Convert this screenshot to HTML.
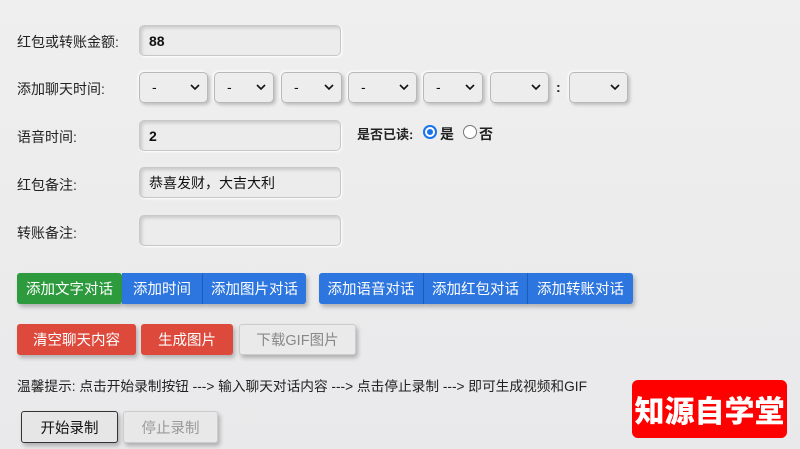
<!DOCTYPE html>
<html><head><meta charset="utf-8"><style>
*{box-sizing:border-box;margin:0;padding:0}
body{width:800px;height:449px;overflow:hidden;background:linear-gradient(180deg,#efefef,#e9e9eb);font-family:"Liberation Sans","Noto Sans CJK SC",sans-serif;font-size:14px;color:#222;position:relative}
.a{position:absolute}
.lbl{left:17px;font-size:14px;color:#222}
.in{position:absolute;border:1.5px solid #c8c8c8;border-radius:5px;background:#ececec;box-shadow:inset 2px 2px 3px rgba(0,0,0,.15),1px 1px 2px #fff;font-size:14px;padding-left:9px;display:flex;align-items:center;font-weight:bold;color:#111}
.sel{position:absolute;top:72px;height:31px;border:1.5px solid #b8b8b8;border-radius:5px;background:#ededed;box-shadow:2px 2px 3px rgba(0,0,0,.2),-1px -1px 2px #fff;font-size:14px;padding-left:12px;line-height:28px;color:#111}
.sel svg{position:absolute;right:7px;top:11px}
.btn{position:absolute;height:31px;color:#fff;font-size:14.5px;display:flex;align-items:center;justify-content:center;border-radius:3px;box-shadow:2px 3px 4px rgba(0,0,0,.25)}
.b{background:#2d76e0;border-right:1px solid #1f5fbf}
.g{background:#2e9a3e}
.r{background:#dd4a3c}
</style></head><body>
<div class="a lbl" style="top:32px">红包或转账金额:</div>
<div class="in" style="left:139px;top:25px;width:202px;height:31px">88</div>
<div class="a lbl" style="top:79px">添加聊天时间:</div>
<div class="sel" style="left:139px;width:69px">-<svg width="10" height="7"><path d="M1 1l4 4 4-4" fill="none" stroke="#111" stroke-width="1.6"/></svg></div>
<div class="sel" style="left:214px;width:60px">-<svg width="10" height="7"><path d="M1 1l4 4 4-4" fill="none" stroke="#111" stroke-width="1.6"/></svg></div>
<div class="sel" style="left:281px;width:61px">-<svg width="10" height="7"><path d="M1 1l4 4 4-4" fill="none" stroke="#111" stroke-width="1.6"/></svg></div>
<div class="sel" style="left:348px;width:69px">-<svg width="10" height="7"><path d="M1 1l4 4 4-4" fill="none" stroke="#111" stroke-width="1.6"/></svg></div>
<div class="sel" style="left:423px;width:60px">-<svg width="10" height="7"><path d="M1 1l4 4 4-4" fill="none" stroke="#111" stroke-width="1.6"/></svg></div>
<div class="sel" style="left:490px;width:59px"><svg width="10" height="7"><path d="M1 1l4 4 4-4" fill="none" stroke="#111" stroke-width="1.6"/></svg></div>
<div class="a" style="left:556px;top:79px;font-weight:bold">:</div>
<div class="sel" style="left:569px;width:59px"><svg width="10" height="7"><path d="M1 1l4 4 4-4" fill="none" stroke="#111" stroke-width="1.6"/></svg></div>
<div class="a lbl" style="top:127px">语音时间:</div>
<div class="in" style="left:139px;top:120px;width:202px;height:31px">2</div>
<div class="a" style="left:357px;top:124px;font-weight:bold;font-size:13px">是否已读:</div>
<div class="a" style="left:423px;top:125px;width:14px;height:14px;border-radius:50%;background:#1a73e8;box-shadow:inset 0 0 0 2px #1a73e8,inset 0 0 0 4px #fff"></div>
<div class="a" style="left:440px;top:124px;font-weight:bold;font-size:14px">是</div>
<div class="a" style="left:463px;top:125px;width:14px;height:14px;border-radius:50%;border:1px solid #777;background:#fff"></div>
<div class="a" style="left:479px;top:124px;font-weight:bold;font-size:14px">否</div>
<div class="a lbl" style="top:175px">红包备注:</div>
<div class="in" style="left:139px;top:167px;width:202px;height:31px;font-weight:normal">恭喜发财，大吉大利</div>
<div class="a lbl" style="top:223px">转账备注:</div>
<div class="in" style="left:139px;top:215px;width:202px;height:31px"></div>
<div class="btn g" style="left:17px;top:273px;width:105px">添加文字对话</div>
<div class="btn b" style="left:122px;top:273px;width:81px;border-radius:0">添加时间</div>
<div class="btn b" style="left:203px;top:273px;width:103px;border-radius:0 3px 3px 0;border-right:0">添加图片对话</div>
<div class="btn b" style="left:319px;top:273px;width:105px;border-radius:3px 0 0 3px">添加语音对话</div>
<div class="btn b" style="left:424px;top:273px;width:104px;border-radius:0">添加红包对话</div>
<div class="btn b" style="left:528px;top:273px;width:105px;border-radius:0 3px 3px 0;border-right:0">添加转账对话</div>
<div class="btn r" style="left:17px;top:324px;width:119px">清空聊天内容</div>
<div class="btn r" style="left:141px;top:324px;width:92px">生成图片</div>
<div class="btn" style="left:239px;top:324px;width:117px;background:#eaeaea;color:#888;border:1px solid #ccc">下载GIF图片</div>
<div class="a" style="left:17px;top:375px;font-size:13.7px;color:#222;white-space:nowrap">温馨提示: 点击开始录制按钮 ---&gt; 输入聊天对话内容 ---&gt; 点击停止录制 ---&gt; 即可生成视频和GIF</div>
<div class="btn" style="left:21px;top:411px;width:97px;height:32px;background:#e6e6e6;color:#111;border:1.5px solid #333">开始录制</div>
<div class="btn" style="left:123px;top:411px;width:95px;height:32px;background:#e8e8e8;color:#999;border:1px solid #ccc">停止录制</div>
<div class="a" style="left:632px;top:380px;width:155px;height:58px;background:#f00;border-radius:6px;color:#fff;font-weight:900;font-size:30px;display:flex;align-items:center;justify-content:center">知源自学堂</div>
</body></html>
